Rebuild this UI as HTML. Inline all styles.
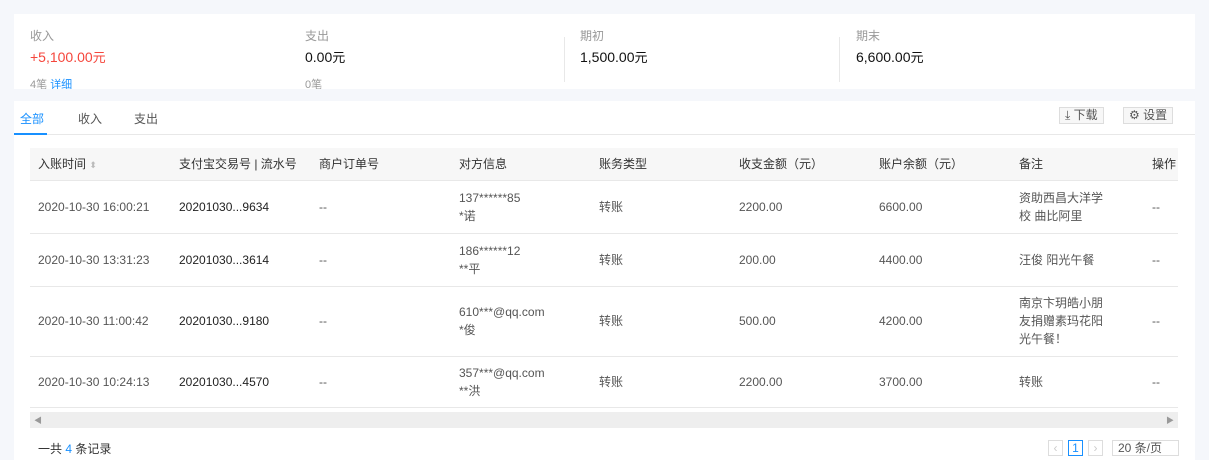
<!DOCTYPE html>
<html><head><meta charset="utf-8"><style>
*{margin:0;padding:0;box-sizing:border-box}
body{width:1209px;height:460px;background:#f5f7fb;font-family:"Liberation Sans","Noto Sans CJK SC",sans-serif;font-size:12px;color:#333;position:relative;overflow:hidden}
.card1{position:absolute;left:14px;top:14px;width:1181px;height:75px;background:#fff;overflow:hidden}
.st{position:absolute;top:13px}
.st .l{color:#999;font-size:12px;height:16px}
.st .v{font-size:14px;color:#111;margin-top:4px}
.st .v span{font-size:13px}
.st .s{font-size:11px;color:#999;margin-top:10px}
.div{position:absolute;top:23px;width:1px;height:45px;background:#e8e8e8}
.card2{position:absolute;left:14px;top:101px;width:1181px;height:359px;background:#fff}
.tabs{position:absolute;left:0;top:0;width:1181px;height:34px;border-bottom:1px solid #e8e8e8}
.tab{position:absolute;top:9px;font-size:12px;color:#555}
.btn{position:absolute;top:6px;height:17px;border:1px solid #ddd;background:#f7f7f7;font-size:12px;color:#555;line-height:15px;padding:0 5px}
table{position:absolute;left:16px;top:47px;width:1148px;border-collapse:collapse}
td,th{text-align:left;font-weight:normal;padding-left:8px;font-size:12px;vertical-align:middle}
th{height:32px;background:#f7f7f7;color:#333;border-bottom:1px solid #e8e8e8}
td{border-bottom:1px solid #e8e8e8;color:#555;line-height:18px}
.scroll{position:absolute;left:16px;top:311px;width:1148px;height:16px;background:#eee;font-size:8px;color:#999}
</style></head><body>
<div class="card1">
 <div class="st" style="left:16px"><div class="l">收入</div><div class="v" style="color:#f5463c">+5,100.00<span>元</span></div><div class="s">4笔 <span style="color:#1890ff">详细</span></div></div>
 <div class="st" style="left:291px"><div class="l">支出</div><div class="v">0.00<span>元</span></div><div class="s">0笔</div></div>
 <div class="div" style="left:550px"></div>
 <div class="st" style="left:566px"><div class="l">期初</div><div class="v">1,500.00<span>元</span></div></div>
 <div class="div" style="left:825px"></div>
 <div class="st" style="left:842px"><div class="l">期末</div><div class="v">6,600.00<span>元</span></div></div>
</div>
<div class="card2">
 <div class="tabs">
  <div class="tab" style="left:6px;color:#1890ff">全部</div>
  <div style="position:absolute;left:0;top:32px;width:33px;height:2px;background:#1890ff"></div>
  <div class="tab" style="left:64px">收入</div>
  <div class="tab" style="left:120px">支出</div>
  <div class="btn" style="left:1045px">⤓ 下载</div>
  <div class="btn" style="left:1109px">⚙ 设置</div>
 </div>
 <table>
  <colgroup><col style="width:141px"><col style="width:140px"><col style="width:140px"><col style="width:140px"><col style="width:140px"><col style="width:140px"><col style="width:140px"><col style="width:133px"><col></colgroup>
  <tr><th>入账时间 <span style="color:#bbb;font-size:9px">⬍</span></th><th>支付宝交易号 | 流水号</th><th>商户订单号</th><th>对方信息</th><th>账务类型</th><th>收支金额（元）</th><th>账户余额（元）</th><th>备注</th><th>操作</th></tr>
  <tr style="height:53px"><td>2020-10-30 16:00:21</td><td style="color:#222">20201030...9634</td><td>--</td><td>137******85<br>*诺</td><td>转账</td><td>2200.00</td><td>6600.00</td><td>资助西昌大洋学<br>校 曲比阿里</td><td>--</td></tr>
  <tr style="height:53px"><td>2020-10-30 13:31:23</td><td style="color:#222">20201030...3614</td><td>--</td><td>186******12<br>**平</td><td>转账</td><td>200.00</td><td>4400.00</td><td>汪俊 阳光午餐</td><td>--</td></tr>
  <tr style="height:70px"><td>2020-10-30 11:00:42</td><td style="color:#222">20201030...9180</td><td>--</td><td>610***@qq.com<br>*俊</td><td>转账</td><td>500.00</td><td>4200.00</td><td>南京卞玥皓小朋<br>友捐赠素玛花阳<br>光午餐！</td><td>--</td></tr>
  <tr style="height:51px"><td>2020-10-30 10:24:13</td><td style="color:#222">20201030...4570</td><td>--</td><td>357***@qq.com<br>**洪</td><td>转账</td><td>2200.00</td><td>3700.00</td><td>转账</td><td>--</td></tr>
 </table>
 <div class="scroll"><span style="position:absolute;left:4px;top:3px">◀</span><span style="position:absolute;right:4px;top:3px">▶</span></div>
 <div style="position:absolute;left:24px;top:339px;color:#333">一共 <span style="color:#1890ff">4</span> 条记录</div>
 <div style="position:absolute;left:1034px;top:339px;width:15px;height:16px;border:1px solid #ddd;color:#ccc;text-align:center;line-height:14px">‹</div>
 <div style="position:absolute;left:1054px;top:339px;width:15px;height:16px;border:1px solid #1890ff;color:#1890ff;text-align:center;line-height:14px">1</div>
 <div style="position:absolute;left:1074px;top:339px;width:15px;height:16px;border:1px solid #ddd;color:#ccc;text-align:center;line-height:14px">›</div>
 <div style="position:absolute;left:1098px;top:339px;width:67px;height:16px;border:1px solid #ddd;color:#555;padding-left:5px;line-height:14px">20 条/页</div>
</div>
</body></html>
